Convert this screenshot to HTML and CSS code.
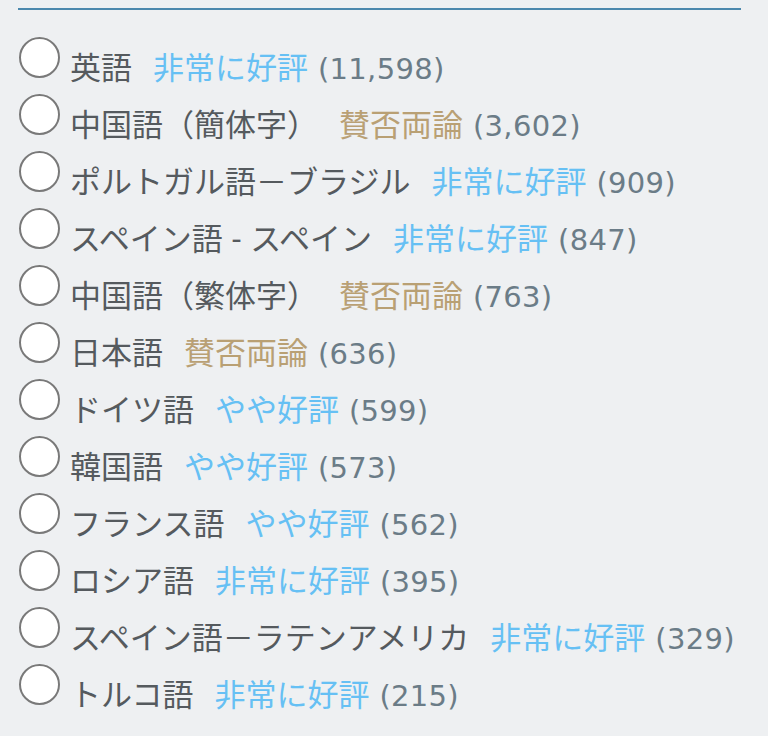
FILE: index.html
```html
<!DOCTYPE html>
<html lang="ja">
<head>
<meta charset="utf-8">
<link rel="stylesheet" href="styles.css">
</head>
<body>
<div class="panel">
  <div class="rule"></div>
  <ul class="langs">
    <li class="lang"><span class="radio"></span><span class="label"><span class="name">英語</span><span class="rating pos">非常に好評</span><span class="count">(11,598)</span></span></li>
    <li class="lang"><span class="radio"></span><span class="label"><span class="name">中国語（簡体字）</span><span class="rating mixed">賛否両論</span><span class="count">(3,602)</span></span></li>
    <li class="lang"><span class="radio"></span><span class="label"><span class="name">ポルトガル語－ブラジル</span><span class="rating pos">非常に好評</span><span class="count">(909)</span></span></li>
    <li class="lang"><span class="radio"></span><span class="label"><span class="name">スペイン語 - スペイン</span><span class="rating pos">非常に好評</span><span class="count">(847)</span></span></li>
    <li class="lang"><span class="radio"></span><span class="label"><span class="name">中国語（繁体字）</span><span class="rating mixed">賛否両論</span><span class="count">(763)</span></span></li>
    <li class="lang"><span class="radio"></span><span class="label"><span class="name">日本語</span><span class="rating mixed">賛否両論</span><span class="count">(636)</span></span></li>
    <li class="lang"><span class="radio"></span><span class="label"><span class="name">ドイツ語</span><span class="rating pos">やや好評</span><span class="count">(599)</span></span></li>
    <li class="lang"><span class="radio"></span><span class="label"><span class="name">韓国語</span><span class="rating pos">やや好評</span><span class="count">(573)</span></span></li>
    <li class="lang"><span class="radio"></span><span class="label"><span class="name">フランス語</span><span class="rating pos">やや好評</span><span class="count">(562)</span></span></li>
    <li class="lang"><span class="radio"></span><span class="label"><span class="name">ロシア語</span><span class="rating pos">非常に好評</span><span class="count">(395)</span></span></li>
    <li class="lang"><span class="radio"></span><span class="label"><span class="name">スペイン語－ラテンアメリカ</span><span class="rating pos">非常に好評</span><span class="count">(329)</span></span></li>
    <li class="lang"><span class="radio"></span><span class="label"><span class="name">トルコ語</span><span class="rating pos">非常に好評</span><span class="count">(215)</span></span></li>
  </ul>
</div>
</body>
</html>
```

FILE: styles.css
```css
html, body {
  margin: 0;
  padding: 0;
  background: #eef0f2;
}
body {
  font-family: "Lato", "Noto Sans CJK JP", sans-serif;
  font-size: 31px;
  color: #555a5e;
}
.panel {
  padding: 8px 0 0 18px;
  width: 723px;
}
.rule {
  height: 2px;
  background: #4b88ad;
}
.langs {
  list-style: none;
  margin: 26px 0 0 0;
  padding: 0;
}
.lang {
  display: flex;
  align-items: flex-start;
  height: 57px;
}
.radio {
  flex: none;
  width: 37px;
  height: 37px;
  margin: 1px 0 0 1px;
  border: 2.5px solid #797979;
  border-radius: 50%;
  background: #ffffff;
}
.label {
  margin-left: 10px;
  line-height: 57px;
  padding-top: 3px;
  white-space: nowrap;
}
.name {
  margin-right: 21px;
}
.rating.pos {
  color: #66c0f4;
}
.rating.mixed {
  color: #b9a074;
}
.count {
  margin-left: 10px;
  font-family: "DejaVu Sans", sans-serif;
  font-size: 29px;
  letter-spacing: 0.3px;
  color: #6b7c87;
}
```
